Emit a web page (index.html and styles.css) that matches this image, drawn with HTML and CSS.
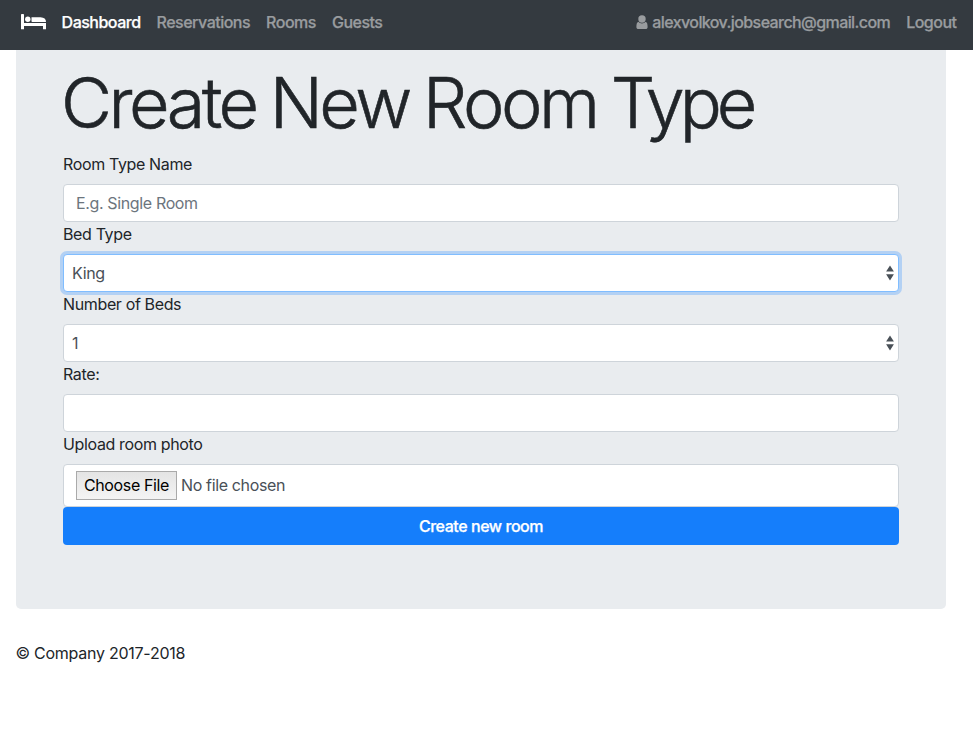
FILE: index.html
```html
<!DOCTYPE html>
<html lang="en">
<head>
<meta charset="utf-8">
<title>Create New Room Type</title>
<link rel="stylesheet" href="styles.css">
</head>
<body>
<nav class="navbar">
  <a class="brand" href="#" aria-label="Home"><svg width="26" height="16" viewBox="0 0 26 16" fill="#fff"><path d="M0 0.8Q0 0 .8 0H2.2Q3 0 3 .8V9H25V15.2H22V12H3V15.2H0Z"/><circle cx="6.8" cy="5.3" r="2.7"/><path d="M10.5 3.2H19.5Q25 3.5 25 8H11.3Q10.5 8 10.5 7.2Z"/></svg></a>
  <a class="link active" href="#">Dashboard</a>
  <a class="link" href="#">Reservations</a>
  <a class="link" href="#">Rooms</a>
  <a class="link" href="#">Guests</a>
  <a class="link user" href="#"><svg width="12" height="15" viewBox="0 0 12 15" fill="currentColor"><circle cx="6" cy="4" r="3.7"/><path d="M2.4 6.8C4.3 8.9 7.7 8.9 9.6 6.8C11.3 7.3 11.6 9.5 11.6 12C11.6 13.4 10.8 14 9.6 14H2.4C1.2 14 .4 13.4 .4 12C.4 9.5 .7 7.3 2.4 6.8Z"/></svg><span>alexvolkov.jobsearch@gmail.com</span></a>
  <a class="link logout" href="#">Logout</a>
</nav>
<main class="jumbotron">
  <h1>Create New Room <span class="last">Type</span></h1>
  <form>
    <label for="name">Room Type Name</label>
    <input class="control" id="name" type="text" placeholder="E.g. Single Room">
    <label for="bed">Bed Type</label>
    <div class="select focused"><select class="control" id="bed"><option>King</option></select><svg class="arrows" width="8" height="16" viewBox="0 0 8 16"><path d="M4 .4 7.9 6.5H.1ZM4 15.4 7.9 9.3H.1Z"/></svg></div>
    <label for="beds">Number of Beds</label>
    <div class="select"><select class="control" id="beds"><option>1</option></select><svg class="arrows" width="8" height="16" viewBox="0 0 8 16"><path d="M4 .4 7.9 6.5H.1ZM4 15.4 7.9 9.3H.1Z"/></svg></div>
    <label for="rate">Rate:</label>
    <input class="control" id="rate" type="text">
    <label for="photo">Upload room photo</label>
    <div class="control file"><button type="button" id="photo">Choose File</button><span>No file chosen</span></div>
    <button class="submit" type="button">Create new room</button>
  </form>
</main>
<footer>© Company 2017-2018</footer>
</body>
</html>
```
FILE: styles.css
```css
* { box-sizing: border-box; }
body {
  margin: 0;
  background: #fff;
  color: #212529;
  font: 16px/24px Inter, "Liberation Sans", sans-serif;
  letter-spacing: -0.36px;
}
.navbar {
  display: flex;
  align-items: center;
  height: 50px;
  padding: 0 16.5px 6px 21px;
  background: #343a40;
}
.brand { display: flex; width: 40.6px; }
.link {
  margin-right: 16px;
  color: #999c9f;
  font-weight: 500;
  letter-spacing: -0.5px;
  text-decoration: none;
  white-space: nowrap;
  -webkit-text-stroke: 0.25px currentColor;
}
.active { color: #fff; }
.user { display: flex; align-items: center; gap: 4px; margin-left: auto; letter-spacing: -0.59px; }
.logout { margin-right: 0; }
.jumbotron {
  width: 930px;
  height: 559px;
  margin-left: 16px;
  padding: 10px 47px 0;
  background: #e9ecef;
  border-radius: 0 0 5px 5px;
}
h1 {
  margin: 0 0 6px -2px;
  font-size: 70px;
  line-height: 86px;
  font-weight: 300;
  letter-spacing: -3.5px;
  word-spacing: -2px;
  white-space: nowrap;
  -webkit-text-stroke: 0.6px currentColor;
}
.last { letter-spacing: -5px; }
label { display: block; margin-bottom: 8px; }
.control {
  display: block;
  width: 100%;
  height: 38px;
  padding: 0 12px;
  border: 1px solid #ced4da;
  border-radius: 4px;
  background: #fff;
  color: #495057;
  font: inherit;
  letter-spacing: inherit;
  outline: 0;
}
.control::placeholder { color: #6c757d; opacity: 1; }
.select { position: relative; }
.select .control { appearance: none; padding: 0 8px; }
.focused .control { border-color: #80bdff; box-shadow: 0 0 0 3px #b3d1f4; }
.arrows { position: absolute; right: 5px; top: 11px; fill: #495057; }
.file { display: flex; align-items: center; gap: 4px; height: 43px; }
.file button {
  width: 101px;
  height: 29px;
  padding: 0 0 1px;
  border: 1px solid #aaa;
  border-radius: 0;
  background: linear-gradient(#e4e4e4, #f4f4f4);
  color: #000;
  font: inherit;
  letter-spacing: inherit;
}
.file span { padding-bottom: 1px; }
.submit {
  display: block;
  width: 100%;
  height: 38px;
  padding: 0;
  border: 0;
  border-radius: 4px;
  background: #157efb;
  color: #fff;
  font: inherit;
  font-weight: 500;
  letter-spacing: -0.45px;
  -webkit-text-stroke: 0.25px currentColor;
}
footer { padding: 32px 15.5px; letter-spacing: -0.26px; }
```
